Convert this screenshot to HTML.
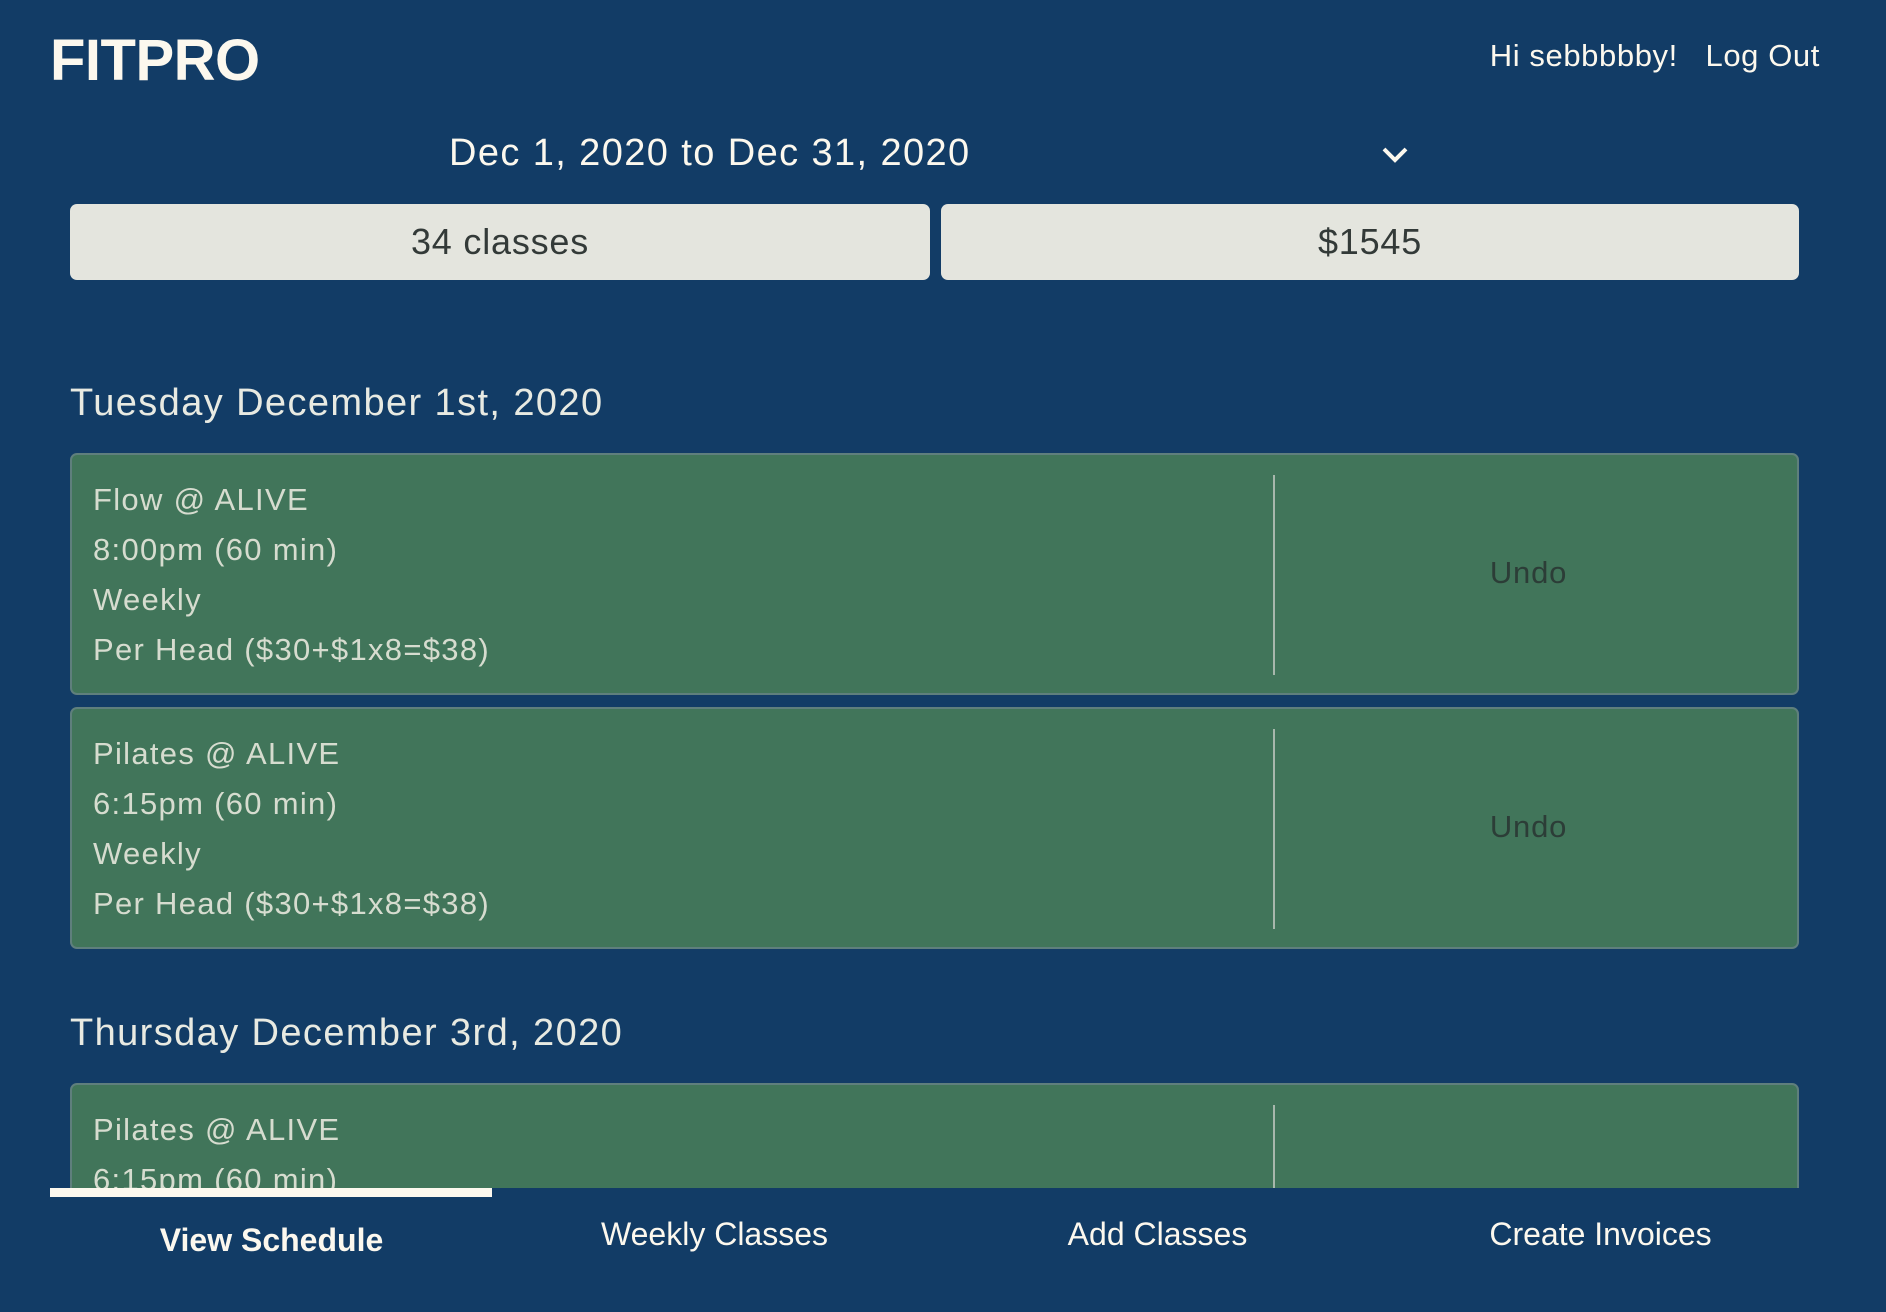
<!DOCTYPE html>
<html><head><meta charset="utf-8"><style>
*{margin:0;padding:0;box-sizing:border-box}
body{width:1886px;height:1312px;background:#123c66;font-family:"Liberation Sans",sans-serif;color:#fcf8ee;position:relative;overflow:hidden}
.abs{position:absolute}
.logo{left:50px;top:27px;font-size:58px;font-weight:bold;letter-spacing:-0.5px}
.user{right:66px;top:38px;font-size:31px;letter-spacing:0.6px}
.date{left:449px;top:132px;font-size:38px;letter-spacing:1.4px}
.btn{top:204px;height:76px;background:#e4e5de;border-radius:7px;color:#333a38;font-size:36px;display:flex;align-items:center;justify-content:center;letter-spacing:0.8px}
.day{left:70px;font-size:38px;color:#e8eae2;letter-spacing:1.4px}
.card{left:70px;width:1729px;background:#41755a;border:2px solid #5f7f7d;border-radius:7px}
.lines{position:absolute;left:21px;top:20px;font-size:31px;color:#d6dccf;line-height:50px;letter-spacing:1.3px}
.div{position:absolute;left:1201px;top:20px;width:2px;background:#a7b7ac}
.undo{position:absolute;left:1188px;right:0;text-align:center;font-size:31px;color:#2c3d37;letter-spacing:0.8px}
.nav{left:0;top:1188px;width:1886px;height:124px;background:#123c66}
.tab{position:absolute;width:443px;text-align:center;font-size:32px;top:28px}
</style></head><body>
<div class="abs logo">FITPRO</div>
<div class="abs user">Hi sebbbbby!&nbsp;&nbsp; Log Out</div>
<div class="abs date">Dec 1, 2020 to Dec 31, 2020</div>
<svg class="abs" style="left:1381px;top:146px" width="28" height="18" viewBox="0 0 28 18"><path d="M3 3 L14 14 L25 3" fill="none" stroke="#fcf8ee" stroke-width="4"/></svg>
<div class="abs btn" style="left:70px;width:860px">34 classes</div>
<div class="abs btn" style="left:941px;width:858px">$1545</div>
<div class="abs day" style="top:382px">Tuesday December 1st, 2020</div>
<div class="abs card" style="top:453px;height:242px">
<div class="lines">Flow @ ALIVE<br>8:00pm (60 min)<br>Weekly<br>Per Head ($30+$1x8=$38)</div>
<div class="div" style="height:200px"></div>
<div class="undo" style="top:100px">Undo</div></div>
<div class="abs card" style="top:707px;height:242px">
<div class="lines">Pilates @ ALIVE<br>6:15pm (60 min)<br>Weekly<br>Per Head ($30+$1x8=$38)</div>
<div class="div" style="height:200px"></div>
<div class="undo" style="top:100px">Undo</div></div>
<div class="abs day" style="top:1012px">Thursday December 3rd, 2020</div>
<div class="abs card" style="top:1083px;height:200px">
<div class="lines">Pilates @ ALIVE<br>6:15pm (60 min)</div>
<div class="div" style="height:200px"></div></div>
<div class="abs nav">
<div class="abs" style="left:50px;top:0;width:442px;height:9px;background:#fcf8ee"></div>
<div class="tab" style="left:50px;top:34px;font-weight:bold">View Schedule</div>
<div class="tab" style="left:493px">Weekly Classes</div>
<div class="tab" style="left:936px">Add Classes</div>
<div class="tab" style="left:1379px">Create Invoices</div>
</div>
</body></html>
